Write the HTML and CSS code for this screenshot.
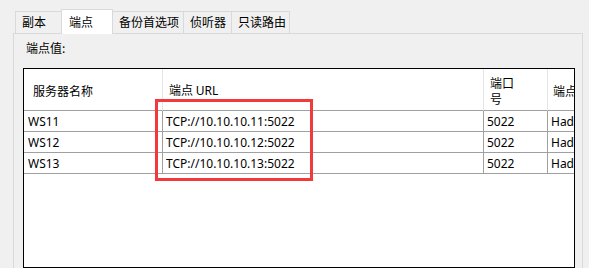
FILE: index.html
```html
<!DOCTYPE html>
<html lang="zh-CN">
<head>
<meta charset="utf-8">
<title>端点</title>
<link rel="stylesheet" href="styles.css">
</head>
<body>
<div class="tabs">
  <div class="tab t1">副本</div>
  <div class="tab t2 active">端点</div>
  <div class="tab t3">备份首选项</div>
  <div class="tab t4">侦听器</div>
  <div class="tab t5">只读路由</div>
</div>
<div class="panel">
  <div class="label">端点值:</div>
  <div class="table">
    <div class="grid">
      <div class="th c1 first"><span>服务器名称</span></div>
      <div class="th c2"><span>端点 <span class="lat">URL</span></span></div>
      <div class="th c3"><span>端口<br>号</span></div>
      <div class="th c4"><span>端点角色</span></div>

      <div class="td c1"><span class="lat">WS11</span></div>
      <div class="td c2"><span class="lat">TCP://10.10.10.11:5022</span></div>
      <div class="td c3"><span class="lat">5022</span></div>
      <div class="td c4"><span class="lat">Hadr</span></div>

      <div class="td c1"><span class="lat">WS12</span></div>
      <div class="td c2"><span class="lat">TCP://10.10.10.12:5022</span></div>
      <div class="td c3"><span class="lat">5022</span></div>
      <div class="td c4"><span class="lat">Hadr</span></div>

      <div class="td c1"><span class="lat">WS13</span></div>
      <div class="td c2"><span class="lat">TCP://10.10.10.13:5022</span></div>
      <div class="td c3"><span class="lat">5022</span></div>
      <div class="td c4"><span class="lat">Hadr</span></div>
    </div>
  </div>
  <div class="highlight"></div>
</div>
</body>
</html>
```

FILE: styles.css
```css
html, body {
  margin: 0;
  padding: 0;
  background: #f0f0f0;
  overflow: hidden;
  height: 268px;
}
body {
  font-family: "Noto Sans CJK SC", "Noto Sans", sans-serif;
  font-size: 12px;
  color: #000;
}
.tabs {
  display: flex;
  align-items: flex-end;
  padding-left: 15px;
  height: 33px;
}
.tab {
  box-sizing: border-box;
  height: 22px;
  line-height: 20px;
  padding-left: 6px;
  border: 1px solid #d9d9d9;
  border-bottom: none;
  margin-right: -1px;
  background: #f0f0f0;
  white-space: nowrap;
}
.tab.active {
  height: 25px;
  line-height: 23px;
  margin-bottom: -1px;
  padding-left: 7px;
  background: #fff;
  position: relative;
  z-index: 2;
}
.t1 { width: 47px; }
.t2 { width: 52px; }
.t3 { width: 72px; }
.t4 { width: 49px; }
.t5 { width: 59px; }

.panel {
  position: relative;
  box-sizing: border-box;
  margin-left: 13px;
  width: 570px;
  height: 240px;
  border: 1px solid #d9d9d9;
  background: #f0f0f0;
}
.label {
  padding: 6px 0 0 12px;
  line-height: 16px;
}
.table {
  box-sizing: border-box;
  margin: 12px 0 0 9px;
  width: 552px;
  height: 200px;
  border: 1px solid #000;
  background: #fff;
  overflow: hidden;
}
.grid {
  display: grid;
  grid-template-columns: 139px 321px 64px 120px;
  grid-template-rows: 42px 21px 21px 21px;
}
.th, .td {
  box-sizing: border-box;
  display: flex;
  align-items: center;
  white-space: nowrap;
  border-bottom: 1px solid #a0a0a0;
  border-right: 1px solid #a0a0a0;
  padding-left: 3px;
}
.th {
  border-right-color: #e5e5e5;
  line-height: 16px;
  padding-top: 2px;
  padding-left: 6px;
}
.th.first { padding-left: 9px; }
.th.c4 { padding-left: 5px; }
.td.c1 { padding-left: 4px; }
.lat {
  font-family: "Noto Sans", "Noto Sans CJK SC", sans-serif;
  font-size: 12px;
}
.highlight {
  position: absolute;
  left: 141px;
  top: 65px;
  width: 158px;
  height: 82px;
  box-sizing: border-box;
  border: 3px solid #f03a3b;
}
```
